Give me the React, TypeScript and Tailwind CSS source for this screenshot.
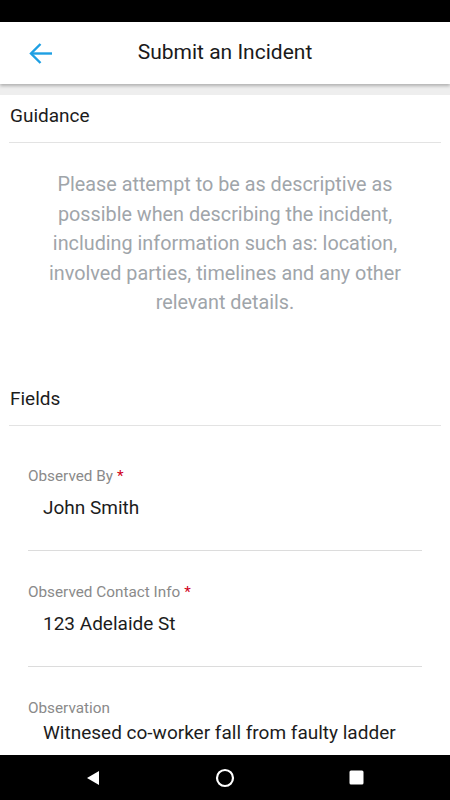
import React from 'react'

const font = { fontFamily: 'Roboto, "Noto Sans", sans-serif' }

interface FieldProps {
    label: string;
    value: string;
    required?: boolean;
    last?: boolean;
}

const Field: React.FC<FieldProps> = ({ label, value, required, last }) => {
    if (last) {
        return (
            <div className="mx-[28px] pt-[31px]">
                <p className="text-[15.3px] leading-[20px] text-[#8a8a8a]">{label}</p>
                <p className="mt-[2px] pl-[15px] text-[19px] leading-[26px] text-[#1c1c1c]">{value}</p>
            </div>
        )
    }
    return (
        <div className="mx-[28px] pt-[40px] border-b border-[#dcdcdc] pb-[29px] [&+&]:pt-[31px]">
            <p className="text-[15.3px] leading-[20px] text-[#8a8a8a]">
                {label}
                {required && <span className="ml-[4px] text-[#d0021b]">*</span>}
            </p>
            <p className="mt-[9px] pl-[15px] text-[19px] leading-[26px] text-[#1c1c1c]">{value}</p>
        </div>
    )
}

const SectionHeader: React.FC<{ title: string }> = ({ title }) => (
    <div className="mx-[9px] pt-[9px] pb-[14px] border-b border-[#e3e3e3]">
        <h2 className="pl-px text-[19px] leading-[24px] text-[#1c1c1c]">{title}</h2>
    </div>
)

export default function App() {
    return (
        <div className="w-[450px] h-[800px] flex flex-col bg-white overflow-hidden" style={font}>
            <div className="h-[22px] bg-black shrink-0" />

            <header className="relative z-10 h-[62px] shrink-0 flex items-center bg-white shadow-[0_2px_3px_rgba(0,0,0,0.25)]">
                <button className="absolute left-[26px] top-[18px] w-[28px] h-[26px] flex items-center justify-center">
                    <svg width="25" height="23" viewBox="0 0 25 23" fill="none" stroke="#1e9fe3" strokeWidth="2.4">
                        <path d="M24 11.5H3" />
                        <path d="M12.5 2L3 11.5l9.5 9.5" />
                    </svg>
                </button>
                <h1 className="w-full text-center text-[21px] text-[#1a1a1a]">Submit an Incident</h1>
            </header>

            <div className="h-[11px] bg-[#eeeeee] shrink-0" />

            <main className="flex-1 overflow-hidden">
                <SectionHeader title="Guidance" />
                <p className="mt-[27px] px-[40px] text-center text-[19.8px] leading-[29.5px] text-[#a0a5aa]">
                    Please attempt to be as descriptive as possible when describing the incident, including information such as: location, involved parties, timelines and any other relevant details.
                </p>

                <div className="mt-[60px]">
                    <SectionHeader title="Fields" />
                </div>

                <Field label="Observed By" value="John Smith" required />
                <Field label="Observed Contact Info" value="123 Adelaide St" required />
                <Field label="Observation" value="Witnesed co-worker fall from faulty ladder" last />
            </main>

            <nav className="h-[45px] shrink-0 bg-black flex items-center justify-between px-[86px]">
                <svg width="14" height="16" viewBox="0 0 14 16">
                    <path d="M13 1v14L1 8z" fill="white" />
                </svg>
                <svg width="20" height="20" viewBox="0 0 20 20">
                    <circle cx="10" cy="10" r="8" fill="none" stroke="white" strokeWidth="2.2" />
                </svg>
                <svg width="15" height="15" viewBox="0 0 15 15">
                    <rect x="0.5" y="0.5" width="14" height="14" rx="1.5" fill="white" />
                </svg>
            </nav>
        </div>
    )
}
